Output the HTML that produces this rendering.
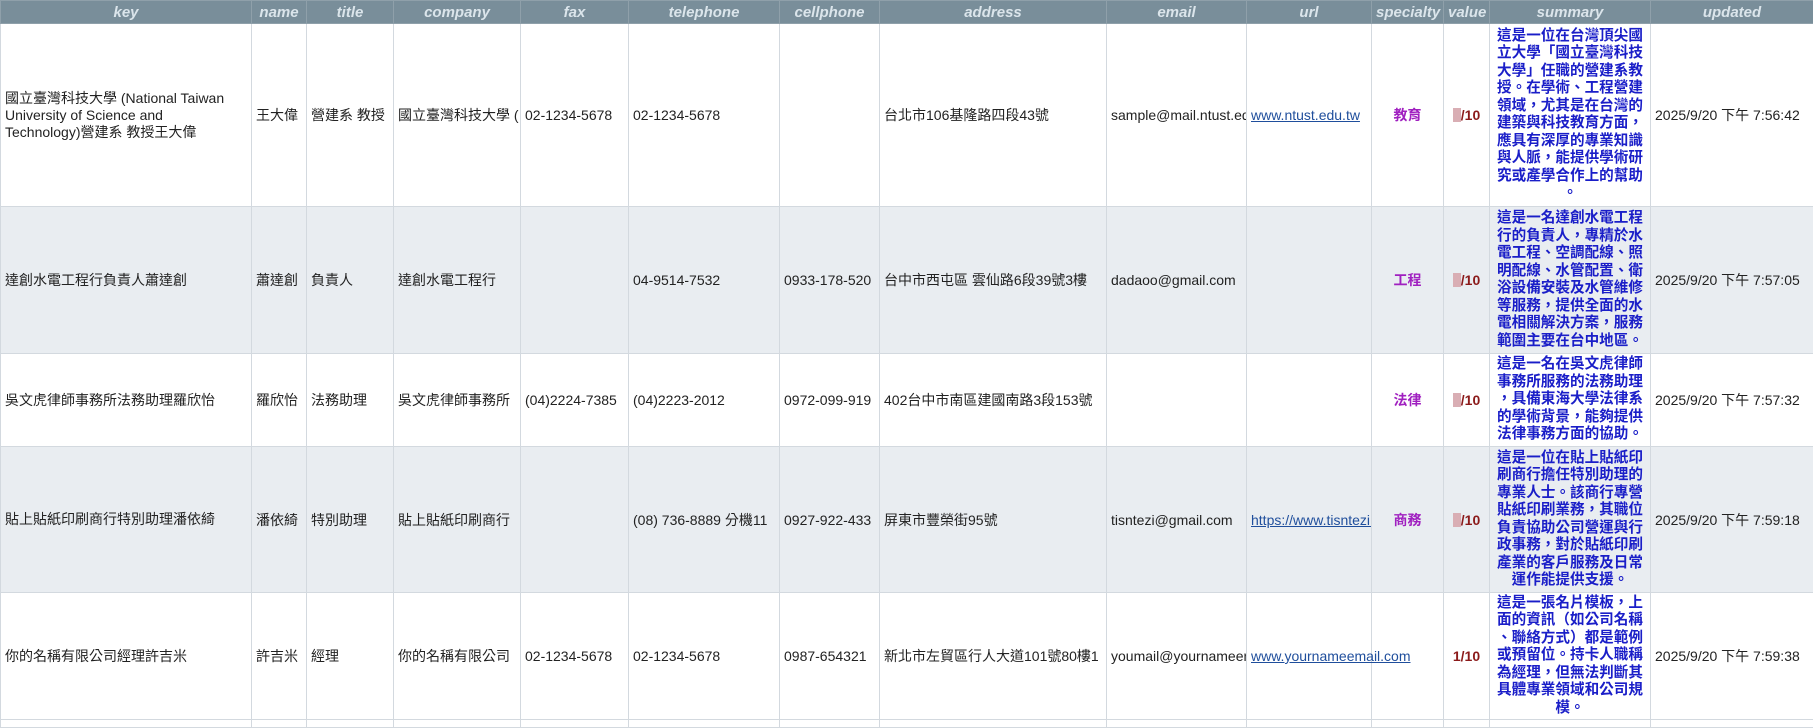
<!DOCTYPE html>
<html><head><meta charset="utf-8"><style>
body{margin:0;width:1813px;height:724px;overflow:hidden;background:#fff;font-family:"Liberation Sans","Noto Sans CJK TC",sans-serif;}
table{border-collapse:collapse;table-layout:fixed;width:1813px;}
td,th{border:1px solid #d3d9df;padding:0 4px;font-size:14px;color:#222;white-space:nowrap;overflow:hidden;vertical-align:middle;}
th{background:#798e9a;color:#dbe5eb;font-style:italic;font-weight:bold;height:22px;font-size:15px;text-align:center;border-color:#8fa0aa;}
tr.g td{background:#e9edf1;}
td.k{white-space:normal;line-height:17px;padding-right:24px;}
td.s{white-space:normal;text-align:center;color:#1a1ec8;font-weight:bold;font-size:14.6px;line-height:17.5px;padding:0 4px;line-break:anywhere;word-break:break-all;}
td.sp{text-align:center;color:#a020c0;font-weight:bold;}
td.v{color:#8b1a1a;font-weight:bold;text-align:center;padding:0;}
td.v i{display:inline-block;width:8px;height:14px;background:#d9aeb4;vertical-align:-2px;}
a{color:#1f4e9c;text-decoration:underline;}
td.ov{overflow:visible;}
</style></head><body>
<table>
<colgroup><col style="width:251px"><col style="width:55px"><col style="width:87px"><col style="width:127px"><col style="width:108px"><col style="width:151px"><col style="width:100px"><col style="width:227px"><col style="width:140px"><col style="width:125px"><col style="width:72px"><col style="width:46px"><col style="width:161px"><col style="width:163px"></colgroup>
<tr><th>key</th><th>name</th><th>title</th><th>company</th><th>fax</th><th>telephone</th><th>cellphone</th><th>address</th><th>email</th><th>url</th><th>specialty</th><th>value</th><th>summary</th><th>updated</th></tr>
<tr style="height:183px"><td class="k">國立臺灣科技大學 (National Taiwan University of Science and Technology)營建系 教授王大偉</td><td>王大偉</td><td>營建系 教授</td><td>國立臺灣科技大學 (</td><td>02-1234-5678</td><td>02-1234-5678</td><td></td><td>台北市106基隆路四段43號</td><td>sample@mail.ntust.edu.tw</td><td><a>www.ntust.edu.tw</a></td><td class="sp">教育</td><td class="v"><i></i>/10</td><td class="s">這是一位在台灣頂尖國立大學「國立臺灣科技大學」任職的營建系教授。在學術、工程營建領域，尤其是在台灣的建築與科技教育方面，應具有深厚的專業知識與人脈，能提供學術研究或產學合作上的幫助。</td><td>2025/9/20 下午 7:56:42</td></tr>
<tr class="g" style="height:147px"><td class="k">達創水電工程行負責人蕭達創</td><td>蕭達創</td><td>負責人</td><td>達創水電工程行</td><td></td><td>04-9514-7532</td><td>0933-178-520</td><td>台中市西屯區 雲仙路6段39號3樓</td><td>dadaoo@gmail.com</td><td></td><td class="sp">工程</td><td class="v"><i></i>/10</td><td class="s">這是一名達創水電工程行的負責人，專精於水電工程、空調配線、照明配線、水管配置、衛浴設備安裝及水管維修等服務，提供全面的水電相關解決方案，服務範圍主要在台中地區。</td><td>2025/9/20 下午 7:57:05</td></tr>
<tr style="height:93px"><td class="k">吳文虎律師事務所法務助理羅欣怡</td><td>羅欣怡</td><td>法務助理</td><td>吳文虎律師事務所</td><td>(04)2224-7385</td><td>(04)2223-2012</td><td>0972-099-919</td><td>402台中市南區建國南路3段153號</td><td></td><td></td><td class="sp">法律</td><td class="v"><i></i>/10</td><td class="s">這是一名在吳文虎律師事務所服務的法務助理，具備東海大學法律系的學術背景，能夠提供法律事務方面的協助。</td><td>2025/9/20 下午 7:57:32</td></tr>
<tr class="g" style="height:146px"><td class="k">貼上貼紙印刷商行特別助理潘依綺</td><td>潘依綺</td><td>特別助理</td><td>貼上貼紙印刷商行</td><td></td><td>(08) 736-8889 分機11</td><td>0927-922-433</td><td>屏東市豐榮街95號</td><td>tisntezi@gmail.com</td><td><a>https://www.tisntezi.com</a></td><td class="sp">商務</td><td class="v"><i></i>/10</td><td class="s">這是一位在貼上貼紙印刷商行擔任特別助理的專業人士。該商行專營貼紙印刷業務，其職位負責協助公司營運與行政事務，對於貼紙印刷產業的客戶服務及日常運作能提供支援。</td><td>2025/9/20 下午 7:59:18</td></tr>
<tr style="height:127px"><td class="k">你的名稱有限公司經理許吉米</td><td>許吉米</td><td>經理</td><td>你的名稱有限公司</td><td>02-1234-5678</td><td>02-1234-5678</td><td>0987-654321</td><td>新北市左貿區行人大道101號80樓1</td><td>youmail@yournameemail.com</td><td class="ov"><a>www.yournameemail.com</a></td><td class="sp"></td><td class="v">1/10</td><td class="s">這是一張名片模板，上面的資訊（如公司名稱、聯絡方式）都是範例或預留位。持卡人職稱為經理，但無法判斷其具體專業領域和公司規模。</td><td>2025/9/20 下午 7:59:38</td></tr>
<tr style="height:8px"><td></td><td></td><td></td><td></td><td></td><td></td><td></td><td></td><td></td><td></td><td></td><td></td><td></td><td></td></tr>
</table>
</body></html>
